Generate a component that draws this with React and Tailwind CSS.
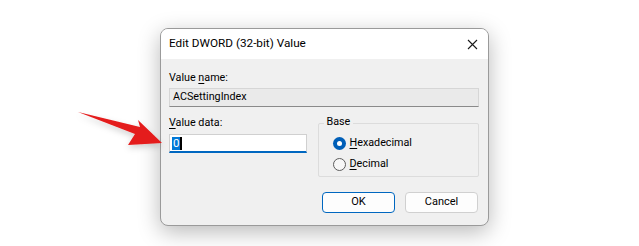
import React from 'react'

const font = { fontFamily: 'Roboto, "Noto Sans", sans-serif' }

const Arrow = () => (
  <svg className="absolute left-0 top-0" width="639" height="246" viewBox="0 0 639 246">
    <defs>
      <filter id="sh" x="-20%" y="-20%" width="140%" height="160%">
        <feDropShadow dx="0" dy="3" stdDeviation="3" floodColor="#000" floodOpacity="0.18" />
      </filter>
    </defs>
    <polygon
      points="78,112 140,127 138,120 162,143 128,145 135,134"
      fill="#e41b1b"
      filter="url(#sh)"
    />
  </svg>
)

const Radio = ({ checked, u, rest }) => (
  <div className="flex items-center h-[21px]">
    {checked ? (
      <span className="w-[13px] h-[13px] rounded-full bg-[#005fb8] flex items-center justify-center">
        <span className="w-[5px] h-[5px] rounded-full bg-white" />
      </span>
    ) : (
      <span className="w-[13px] h-[13px] rounded-full border border-[#5c5c5c] bg-[#f7f7f7]" />
    )}
    <span className="ml-[4px] text-black">
      <span className="underline underline-offset-2">{u}</span>
      {rest}
    </span>
  </div>
)

export default function App() {
  return (
    <div className="relative w-[639px] h-[246px] bg-white overflow-hidden" style={font}>
      <div className="pt-[28px] pl-[160px]">
        <div className="w-[329px] h-[198px] rounded-[8px] border border-[#9a9a9a] bg-[#f0f0f0] overflow-hidden shadow-[0_6px_22px_rgba(0,0,0,0.28)]">
          <div className="h-[30px] bg-white flex items-center justify-between pl-[8px] pr-[10px]">
            <span className="text-[11.75px] text-black">Edit DWORD (32-bit) Value</span>
            <svg width="11" height="11" viewBox="0 0 11 11">
              <path d="M1 1 L10 10 M10 1 L1 10" stroke="#1a1a1a" strokeWidth="1.1" />
            </svg>
          </div>
          <div className="pl-[8px] pr-[9px] pt-[11px] text-[10.75px] text-black">
            <div className="leading-[16px]">
              Value <span className="underline underline-offset-2">n</span>ame:
            </div>
            <div className="mt-[2px] h-[19px] w-[310px] bg-[#eaeaea] border border-[#d6d6d6] border-b-[#8a8a8a] flex items-center pl-[3px] leading-none">
              ACSettingIndex
            </div>
            <div className="mt-[8px] flex">
              <div className="w-[139px]">
                <div className="leading-[16px]">
                  <span className="underline underline-offset-2">V</span>alue data:
                </div>
                <div className="mt-[3px] h-[19px] w-[138px] bg-white border border-[#d0d0d0] border-b-2 border-b-[#0067c0] flex items-center pl-[2px] text-[11.5px]">
                  <span className="bg-[#0078d7] text-white leading-[13px] px-[1px]">0</span>
                  <span className="w-[2px] h-[13px] bg-black" />
                </div>
              </div>
              <div className="ml-[10px] w-[162px] relative mt-[8px]">
                <div className="h-[54px] border border-[#dcdcdc] rounded-[2px] pl-[14px] pt-[9px]">
                  <Radio checked u="H" rest="exadecimal" />
                  <Radio u="D" rest="ecimal" />
                </div>
                <span className="absolute left-[6px] top-[-9px] px-[3px] bg-[#f0f0f0] leading-[16px]">Base</span>
              </div>
            </div>
            <div className="mt-[15px] flex justify-end gap-[10px] pr-[1px] text-[11px]">
              <div className="w-[73px] h-[21px] rounded-[4px] border border-[#0067c0] bg-[#fdfdfd] flex items-center justify-center">OK</div>
              <div className="w-[73px] h-[21px] rounded-[4px] border border-[#d0d0d0] bg-[#fdfdfd] flex items-center justify-center">Cancel</div>
            </div>
          </div>
        </div>
      </div>
      <Arrow />
    </div>
  )
}
